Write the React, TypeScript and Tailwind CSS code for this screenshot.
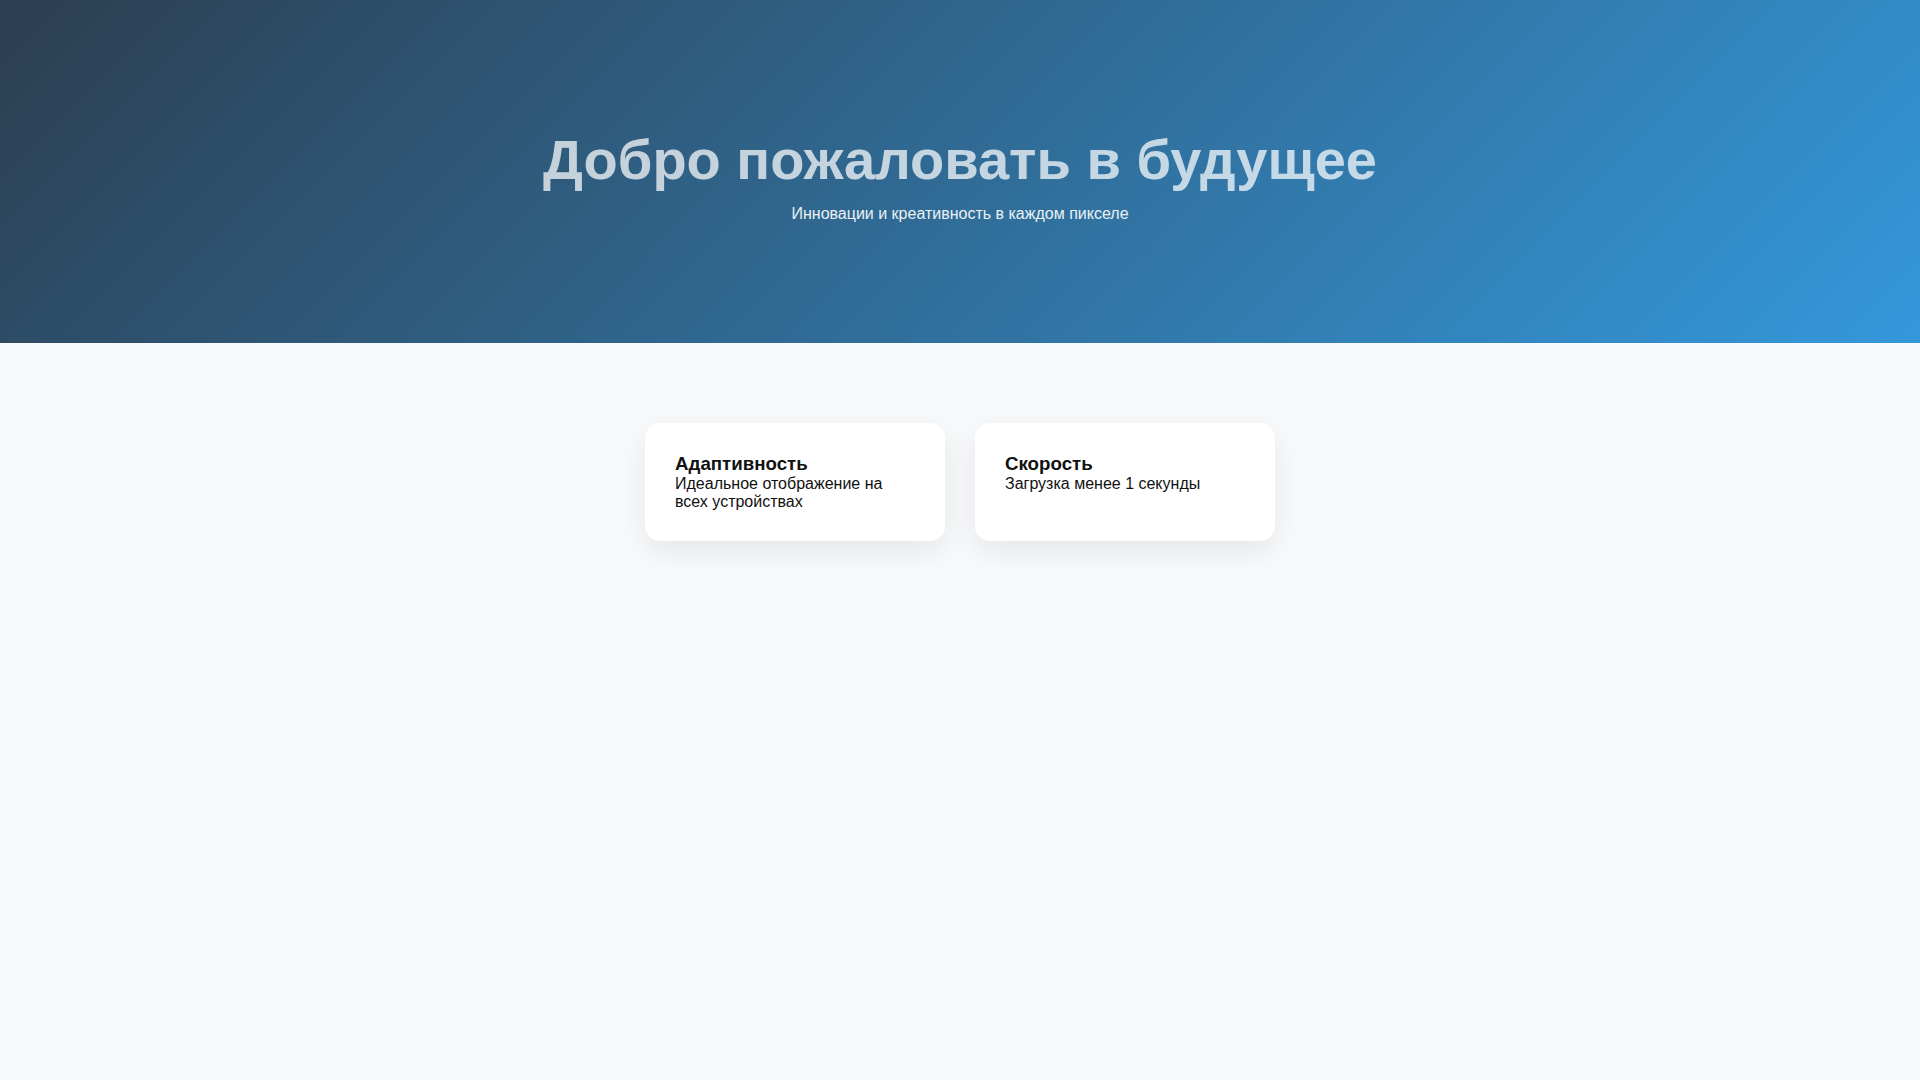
const features = [
  { title: "Адаптивность", text: "Идеальное отображение на всех устройствах" },
  { title: "Скорость", text: "Загрузка менее 1 секунды" },
];

export default function App() {
  return (
    <div className="min-h-screen bg-[#f8f9fa] font-['Liberation_Sans',Arial,sans-serif] leading-[normal]">
      <header className="h-[343px] bg-[linear-gradient(135deg,#2c3e50,#3498db)] px-5 pt-[127px] text-center">
        <h1 className="text-[56px] leading-[normal] font-bold text-white/[0.72]">Добро пожаловать в будущее</h1>
        <p className="mt-[13px] text-base leading-[normal] text-white/90">Инновации и креативность в каждом пикселе</p>
      </header>

      <section className="mt-20 flex justify-center gap-[30px]">
        {features.map((f) => (
          <div
            key={f.title}
            className="w-[300px] rounded-[15px] bg-white p-[30px] shadow-[0_10px_30px_rgba(0,0,0,0.08)]"
          >
            <h3 className="text-[18.72px] leading-[normal] font-bold text-[#111]">{f.title}</h3>
            <p className="text-base leading-[normal] text-[#111]">{f.text}</p>
          </div>
        ))}
      </section>
    </div>
  );
}
